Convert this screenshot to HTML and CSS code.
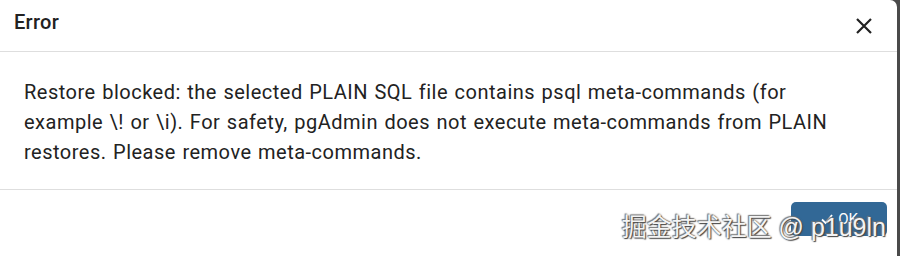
FILE: index.html
```html
<!DOCTYPE html>
<html>
<head>
<meta charset="utf-8">
<link rel="stylesheet" href="styles.css">
</head>
<body>
<div class="dialog">
  <div class="header">
    <div class="title">Error</div>
    <button class="close" aria-label="Close">
      <svg width="16" height="16" viewBox="0 0 16 16"><path d="M1 1L15 15M15 1L1 15" stroke="#222" stroke-width="2.2" fill="none"/></svg>
    </button>
  </div>
  <div class="body">
    <p class="msg">Restore blocked: the selected PLAIN SQL file contains psql meta-commands (for example \! or \i). For safety, pgAdmin does not execute meta-commands from PLAIN restores. Please remove meta-commands.</p>
  </div>
  <div class="footer">
    <button class="ok">
      <svg width="14" height="14" viewBox="0 0 14 14"><path d="M2 7.5L5.5 11L12 3" stroke="#fff" stroke-width="1.8" fill="none"/></svg>
      <span>OK</span>
    </button>
  </div>
  <div class="watermark">掘金技术社区 @ p1u9ln</div>
</div>
</body>
</html>
```
FILE: styles.css
```css
html, body {
  margin: 0;
  padding: 0;
}
body {
  background: #4a4a4a;
  width: 900px;
  height: 256px;
  overflow: hidden;
  font-family: Roboto, "Noto Sans", sans-serif;
}
.dialog {
  position: relative;
  width: 897px;
  height: 256px;
  background: #fff;
  border-top-right-radius: 7px;
  display: flex;
  flex-direction: column;
}
.header {
  height: 51px;
  border-bottom: 1px solid #dedede;
  display: flex;
  align-items: center;
  justify-content: space-between;
  padding: 0 18px 0 14px;
  box-sizing: content-box;
}
.title {
  font-size: 20px;
  font-weight: 500;
  letter-spacing: 0.3px;
  color: #222;
  margin-top: -7px;
}
.close {
  border: 0;
  background: none;
  padding: 0;
  width: 16px;
  height: 16px;
  display: flex;
  margin-right: 7px;
}
.body {
  height: 138px;
  border-bottom: 1px solid #dedede;
  padding: 25px 24px 0 24px;
  box-sizing: border-box;
}
.msg {
  margin: 0;
  font-size: 20px;
  letter-spacing: 0.5px;
  word-spacing: 1px;
  line-height: 30px;
  color: #222;
  width: 845px;
}
.footer {
  display: flex;
  justify-content: flex-end;
  padding: 12px 10px 0 0;
}
.ok {
  width: 96px;
  height: 34px;
  border: 0;
  border-radius: 5px;
  background: #326896;
  color: #fff;
  font-family: Roboto, sans-serif;
  font-size: 15px;
  display: flex;
  align-items: center;
  justify-content: center;
  gap: 4px;
}
.watermark {
  position: absolute;
  right: 11px;
  top: 207px;
  font-family: "Liberation Sans", "Noto Sans CJK SC", sans-serif;
  font-size: 25px;
  color: #f4f4f4;
  text-shadow: 1px 1px 1px #444, -1px -1px 1px #777, 0 0 2px #666;
}
```
